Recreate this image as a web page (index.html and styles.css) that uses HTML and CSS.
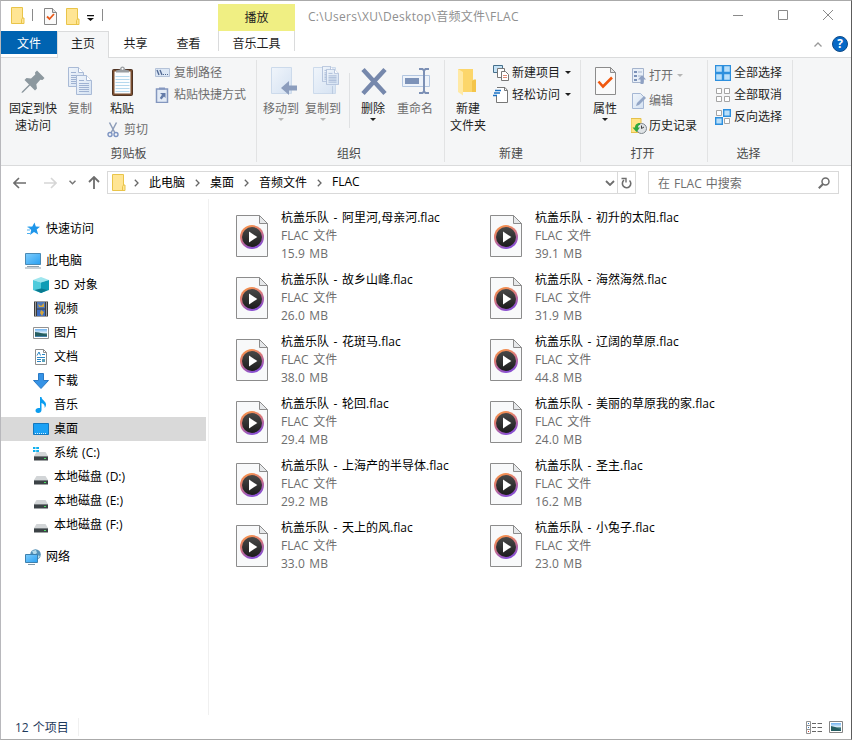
FILE: index.html
```html
<!DOCTYPE html>
<html lang="zh-CN">
<head>
  <meta charset="UTF-8">
  <meta name="viewport" content="width=device-width, initial-scale=1.0">
  <title>FLAC</title>
  <link rel="stylesheet" href="styles.css">
</head>
<body>
  <!-- shared icons -->
  <svg class="defs" width="0" height="0">
    <defs>
      <linearGradient id="gRing" x1="0" y1="0" x2="0.4" y2="1">
        <stop offset="0" stop-color="#ff9a3c"/><stop offset="0.5" stop-color="#d9787a"/><stop offset="1" stop-color="#8a50d0"/>
      </linearGradient>
      <linearGradient id="gDisc" x1="0" y1="0" x2="0" y2="1">
        <stop offset="0" stop-color="#484848"/><stop offset="1" stop-color="#1c1c1c"/>
      </linearGradient>
      <linearGradient id="gBlue" x1="0" y1="0" x2="1" y2="1">
        <stop offset="0" stop-color="#7fcdfc"/><stop offset="1" stop-color="#2aa0f2"/>
      </linearGradient>
      <linearGradient id="gDoc" x1="0" y1="0" x2="1" y2="1">
        <stop offset="0" stop-color="#f0f5fb"/><stop offset="1" stop-color="#d5e2f2"/>
      </linearGradient>
      <linearGradient id="gSky" x1="0" y1="0" x2="0" y2="1">
        <stop offset="0" stop-color="#6fb2f0"/><stop offset="0.5" stop-color="#e4f2fc"/><stop offset="0.6" stop-color="#35706a"/><stop offset="1" stop-color="#4a86b8"/>
      </linearGradient>
    </defs>
    <symbol id="flac" viewBox="0 0 32 42">
      <path d="M.5.5h23l8 8v33H.5z" fill="#f8f9fa" stroke="#8c8c8c"/>
      <path d="M23.5.5v8h8z" fill="#e6e8ea" stroke="#8c8c8c"/>
      <circle cx="16" cy="22" r="12" fill="url(#gRing)"/>
      <circle cx="16" cy="22" r="10" fill="url(#gDisc)"/>
      <path d="M13 16.5v11l8.3-5.5z" fill="#fff"/>
    </symbol>
    <symbol id="folder" viewBox="0 0 14 17">
      <path d="M.5.5h11v10.500h1.500v5.500H.5z" fill="#ffe594" stroke="#e9c449"/>
      <path d="M10.500 16V12.500l1-1.500" fill="none" stroke="#e9c449"/>
    </symbol>
    <symbol id="drive" viewBox="0 0 16 16">
      <path d="M3.500 6h9L15 10H1z" fill="#d2d5d7"/>
      <path d="M1 10h14v4.500H1z" fill="#3c4246"/>
      <path d="M1 10h14v1H1z" fill="#777d80"/>
      <path d="M11 12h2v1h-2z" fill="#48e060"/>
    </symbol>
    <symbol id="gt" viewBox="0 0 5 8">
      <path d="M.8.8 4 4 .8 7.200" fill="none" stroke="#666" stroke-width="1.300"/>
    </symbol>
    <symbol id="page" viewBox="0 0 16 20">
      <path d="M.5.5h10l5 5v14H.5z" fill="url(#gDoc)" stroke="#a9bad6"/>
      <path d="M10.500.5v5h5" fill="#fff" stroke="#a9bad6"/>
      <path d="M3 5.500h5M3 8.500h10M3 10.500h10M3 12.500h10M3 14.500h10M3 16.500h10" stroke="#9fb2d2"/>
    </symbol>
  </svg>

  <div class="window">
    <header class="titlebar">
      <svg class="qa-folder" width="14" height="17"><use href="#folder"/></svg>
      <span class="qa-sep"></span>
      <svg class="qa-check" width="13" height="17" viewBox="0 0 13 17">
        <path d="M.5.5h8l4 4v12H.5z" fill="#fafafa" stroke="#858585"/>
        <path d="M8.500.5v4h4" fill="#ddd" stroke="#858585"/>
        <path d="M3 8.500 5.500 11 10 6" fill="none" stroke="#e8591a" stroke-width="1.800"/>
      </svg>
      <svg class="qa-folder2" width="14" height="17"><use href="#folder"/></svg>
      <svg class="qa-more" width="7" height="6" viewBox="0 0 7 6"><path d="M0 0h7v1.200H0zM0 3h7L3.500 6z" fill="#111"/></svg>
      <span class="qa-sep"></span>
      <div class="context-tab">播放</div>
      <div class="path">C:\Users\XU\Desktop\音频文件\FLAC</div>
      <div class="controls">
        <svg width="10" height="10" viewBox="0 0 10 10"><path d="M0 5.500h10" stroke="#8a8a8a"/></svg>
        <svg width="10" height="10" viewBox="0 0 10 10"><path d="M.5.5h9v9h-9z" fill="none" stroke="#8a8a8a"/></svg>
        <svg width="10" height="10" viewBox="0 0 10 10"><path d="M0 0l10 10M10 0 0 10" stroke="#8a8a8a"/></svg>
      </div>
    </header>

    <nav class="tabs">
      <span class="tab file">文件</span>
      <span class="tab active">主页</span>
      <span class="tab">共享</span>
      <span class="tab">查看</span>
      <span class="tab music">音乐工具</span>
      <span class="help">
        <svg width="8" height="5" viewBox="0 0 8 5"><path d="M.5 4.500 4 1l3.500 3.500" fill="none" stroke="#999" stroke-width="1.300"/></svg>
        <span class="help-dot">?</span>
      </span>
    </nav>

    <section class="ribbon">
      <div class="group clip">
        <div class="group-body">
          <div class="big pin">
            <svg width="32" height="34" viewBox="0 0 32 34"><path d="M18 6.500 20 4.500 27.500 12l-2 2-2.200-.3-4 4.500.7 4.300-2 2-5-5L6 26.500 4.500 27l.5-1.500 7-7-4.500-4.500 2-2 4.500.5 4.300-4z" fill="#8c989f"/></svg>
            <span>固定到快<br>速访问</span>
          </div>
          <div class="big off">
            <svg width="32" height="34" viewBox="0 0 32 34"><use href="#page" x="4" y="1" width="16" height="20"/><use href="#page" x="12" y="9" width="16" height="20"/></svg>
            <span>复制</span>
          </div>
          <div class="paste">
            <div class="big">
              <svg width="32" height="34" viewBox="0 0 32 34">
                <rect x="6.500" y="3.500" width="20" height="26" rx="1" fill="#7a4e30" stroke="#4e3323"/>
                <path d="M8.500 5.500h16v22h-16z" fill="#fbfdff"/>
                <path d="M9.500 10.500h14M9.500 13.500h14M9.500 16.500h14M9.500 19.500h14M9.500 22.500h14M9.500 25.500h14" stroke="#b5d8ee"/>
                <path d="M10 6.500V4.500l4-1c0-4 5-4 5 0l4 1v2z" fill="#9a9ea2"/><circle cx="16.500" cy="2.800" r="1" fill="#fff"/>
              </svg>
              <span>粘贴</span>
            </div>
            <div class="small off">
              <svg width="12" height="16" viewBox="0 0 12 16"><path d="M2.500.5 8 11M9.500.5 4 11" stroke="#8c9cb8" stroke-width="1.500"/><circle cx="3" cy="12.500" r="2" fill="none" stroke="#7d94c2" stroke-width="1.400"/><circle cx="9" cy="12.500" r="2" fill="none" stroke="#7d94c2" stroke-width="1.400"/></svg>
              <span>剪切</span>
            </div>
          </div>
          <div class="list">
            <div class="small off">
              <svg width="16" height="16" viewBox="0 0 16 16"><path d="M.5 3.500h14v8H.5z" fill="#dce7f5" stroke="#b4c2d8"/><path d="M2 5l2 5M5 5l2 5" stroke="#536a94" stroke-width="1.400"/><path d="M8 9h1v1H8zM10 9h1v1h-1zM12 9h1v1h-1z" fill="#536a94"/></svg>
              <span>复制路径</span>
            </div>
            <div class="small off">
              <svg width="16" height="16" viewBox="0 0 16 16"><path d="M1.500 2h11v13.500h-11z" fill="#e3ebf6" stroke="#8497bf" stroke-width="1.500"/><path d="M4 .5h6v2H4z" fill="#8497bf"/><path d="M5 6h5.500v5L9 9.500 6.500 12.500 4.800 11 7 7.800z" fill="#647ca9"/></svg>
              <span>粘贴快捷方式</span>
            </div>
          </div>
        </div>
        <div class="group-name">剪贴板</div>
      </div>

      <div class="group organize">
        <div class="group-body">
          <div class="big off">
            <svg width="32" height="34" viewBox="0 0 32 34"><path d="M6.500 1.500h20v26h-20z" fill="url(#gDoc)" stroke="#ccdaeb"/><path d="M23.500 21v7M23.500 21h3" stroke="#bccbe0"/><path d="M16 22l8-7v4.500h8v5h-8V29z" fill="#8c9dbd"/></svg>
            <span>移动到</span><i class="arrow"></i>
          </div>
          <div class="big off">
            <svg width="32" height="34" viewBox="0 0 32 34"><path d="M6.500 1.500h22v26h-22z" fill="url(#gDoc)" stroke="#ccdaeb"/><path d="M25.500 20v8" stroke="#bccbe0"/><use href="#page" x="15" y="0" width="13" height="16"/><use href="#page" x="19" y="3" width="13" height="16"/></svg>
            <span>复制到</span><i class="arrow"></i>
          </div>
          <span class="divider"></span>
          <div class="big">
            <svg width="32" height="34" viewBox="0 0 32 34"><path d="M6 3.500 28 27.500M28 3.500 6 27.500" stroke="#7688ac" stroke-width="4.500"/></svg>
            <span>删除</span><i class="arrow"></i>
          </div>
          <div class="big off">
            <svg width="32" height="34" viewBox="0 0 32 34"><path d="M3.500 9.500h27v11h-27z" fill="#eef3fa" stroke="#b3c6e0"/><path d="M6 12h14v6H6z" fill="#7c92b8"/><path d="M20 3h3.500l1.500 1.500L26.500 3H30M25 4v22M20 27h3.500l1.500-1.500L26.500 27H30" fill="none" stroke="#7c90b5" stroke-width="2"/></svg>
            <span>重命名</span>
          </div>
        </div>
        <div class="group-name">组织</div>
      </div>

      <div class="group create">
        <div class="group-body">
          <div class="big">
            <svg width="32" height="34" viewBox="0 0 32 34"><path d="M6 3h15v13h3v10H6z" fill="#fcd66b"/><path d="M6 3l5 3v23.500L6 26z" fill="#ffe9a5"/><path d="M20 15l2-1.500h2V26h-4z" fill="#f4c54a"/></svg>
            <span>新建<br>文件夹</span>
          </div>
          <div class="list">
            <div class="small">
              <svg width="16" height="16" viewBox="0 0 16 16"><path d="M.5.5h9v7h-9z" fill="#c6e2f5" stroke="#46708c"/><path d="M4.500 3.500h7v9h-7z" fill="#fff" stroke="#777"/><path d="M8.500 6.500h4l3 3v6h-7z" fill="#fff" stroke="#777"/><path d="M10 10.500h4M10 12.500h4" stroke="#de8c78"/></svg>
              <span>新建项目</span><i class="arrow"></i>
            </div>
            <div class="small">
              <svg width="16" height="16" viewBox="0 0 16 16"><path d="M4 .5h8l2.500 3v12H3.500V9" fill="#fff" stroke="#777"/><path d="M11.500.5v3h3" fill="none" stroke="#777"/><path d="M2 3.500h6M1 6h6M0 8.500h4" stroke="#1a72c4" stroke-width="1.300"/></svg>
              <span>轻松访问</span><i class="arrow"></i>
            </div>
          </div>
        </div>
        <div class="group-name">新建</div>
      </div>

      <div class="group open">
        <div class="group-body">
          <div class="big">
            <svg width="32" height="34" viewBox="0 0 32 34"><path d="M6.500 1.500h15l5 5v22h-20z" fill="#fafafa" stroke="#8c8c8c"/><path d="M21.500 1.500v5h5z" fill="#e4e4e4" stroke="#8c8c8c"/><path d="M9.500 15.500 14 20.500 23 11.500" fill="none" stroke="#f0580f" stroke-width="2.600"/></svg>
            <span>属性</span><i class="arrow"></i>
          </div>
          <div class="list">
            <div class="small off">
              <svg width="16" height="16" viewBox="0 0 16 16"><path d="M1.500.5h11v14h-11z" fill="#e8eff8" stroke="#a5b4cd"/><path d="M3 3h3v2H3zM3 7h3v2H3zM3 11h3v2H3z" fill="#7c92b8"/><path d="M7 4h4M7 8h3" stroke="#a5b4cd"/><path d="M11 7l4 4.500h-2.500V16h-3v-4.500H7z" fill="#8fa1c3"/></svg>
              <span>打开</span><i class="arrow"></i>
            </div>
            <div class="small off">
              <svg width="16" height="16" viewBox="0 0 16 16"><path d="M1.500.5h8l3 3v12h-11z" fill="url(#gDoc)" stroke="#a5b7d4"/><path d="M5 13l1-3 7-7 2 2-7 7z" fill="#93a6c6"/></svg>
              <span>编辑</span>
            </div>
            <div class="small">
              <svg width="16" height="16" viewBox="0 0 16 16"><path d="M0 .5h10v14H0z" fill="#ffe487" stroke="#e5c04b"/><circle cx="10.500" cy="10.500" r="5" fill="#dfe3e6" stroke="#7e868c"/><path d="M10.500 7.500v3l2.500-1.500" fill="none" stroke="#444"/><path d="M9 5C5 5 4 7.500 4 9.500H1.500L5.500 14l3.500-4.500H7c0-2 1-2.500 2-2.500z" fill="#2fa83f"/></svg>
              <span>历史记录</span>
            </div>
          </div>
        </div>
        <div class="group-name">打开</div>
      </div>

      <div class="group select">
        <div class="group-body">
          <div class="list">
            <div class="small">
              <svg width="16" height="16" viewBox="0 0 16 16"><path d="M.5.5h7v7h-7zM8.500.5h7v7h-7zM.5 8.500h7v7h-7zM8.500 8.500h7v7h-7z" fill="#b9dffa" stroke="#2d8fdd" stroke-width="1.400"/></svg>
              <span>全部选择</span>
            </div>
            <div class="small">
              <svg width="16" height="16" viewBox="0 0 16 16"><path d="M1.500 1.500h5v5h-5zM9.500 1.500h5v5h-5zM1.500 9.500h5v5h-5zM9.500 9.500h5v5h-5z" fill="#fff" stroke="#a5a5a5"/></svg>
              <span>全部取消</span>
            </div>
            <div class="small">
              <svg width="16" height="16" viewBox="0 0 16 16"><path d="M1.500 1.500h5v5h-5zM9.500 9.500h5v5h-5z" fill="#fff" stroke="#a5a5a5"/><path d="M8.700.7h6.600v6.600H8.700zM.7 8.700h6.600v6.600H.7z" fill="#b9dffa" stroke="#2d8fdd" stroke-width="1.400"/></svg>
              <span>反向选择</span>
            </div>
          </div>
        </div>
        <div class="group-name">选择</div>
      </div>
    </section>

    <div class="address-row">
      <svg class="back" width="13" height="12" viewBox="0 0 13 12"><path d="M6 1 1 6l5 5M1 6h12" fill="none" stroke="#6d6d6d" stroke-width="1.600"/></svg>
      <svg class="forward" width="13" height="12" viewBox="0 0 13 12"><path d="M7 1l5 5-5 5M12 6H0" fill="none" stroke="#d6d6d6" stroke-width="1.600"/></svg>
      <svg class="recent" width="7" height="5" viewBox="0 0 7 5"><path d="M.5.8 3.500 3.800 6.500.8" fill="none" stroke="#777" stroke-width="1.500"/></svg>
      <svg class="up" width="12" height="13" viewBox="0 0 12 13"><path d="M1 6l5-5 5 5M6 1v12" fill="none" stroke="#6d6d6d" stroke-width="1.800"/></svg>
      <div class="address">
        <svg class="address-folder" width="14" height="17"><use href="#folder"/></svg>
        <svg class="gt" width="5" height="8"><use href="#gt"/></svg>
        <span>此电脑</span>
        <svg class="gt" width="5" height="8"><use href="#gt"/></svg>
        <span>桌面</span>
        <svg class="gt" width="5" height="8"><use href="#gt"/></svg>
        <span>音频文件</span>
        <svg class="gt" width="5" height="8"><use href="#gt"/></svg>
        <span>FLAC</span>
        <svg class="drop" width="10" height="6" viewBox="0 0 10 6"><path d="M1 1l4 4 4-4" fill="none" stroke="#6d6d6d" stroke-width="1.800"/></svg>
        <div class="refresh"><svg width="11" height="12" viewBox="0 0 11 12"><path d="M8.500 3.500a4.200 4.200 0 1 1-5.500-.3" fill="none" stroke="#6d6d6d" stroke-width="1.600"/><path d="M.5 1.500H5v4" fill="none" stroke="#6d6d6d" stroke-width="1.400"/></svg></div>
      </div>
      <div class="search">
        <span>在 FLAC 中搜索</span>
        <svg width="12" height="12" viewBox="0 0 12 12"><circle cx="7.500" cy="4.500" r="3.500" fill="none" stroke="#6d6d6d" stroke-width="1.500"/><path d="M5 7 .8 11.200" stroke="#6d6d6d" stroke-width="2"/></svg>
      </div>
    </div>

    <main class="main">
      <aside class="tree">
        <div class="node root">
          <svg width="16" height="16" viewBox="0 0 16 16"><path d="M9.500 1.500l1.300 4 4.200.2-3.300 2.800 1.500 5-4.200-2.500-4 3 1.200-5L3 6l4.300-.4z" fill="#1e96ea"/><path d="M2.500 6h3M2 9h3M2 12.500h3" stroke="#4bb0f0"/></svg>
          <span>快速访问</span>
        </div>
        <div class="node root gap">
          <svg width="16" height="16" viewBox="0 0 16 16"><path d="M.5.5h15v11H.5z" fill="url(#gBlue)" stroke="#4a8ab5"/><path d="M2 13h12v1H2zM0 14.500h16v1H0z" fill="#90a0ab"/></svg>
          <span>此电脑</span>
        </div>
        <div class="node">
          <svg width="16" height="16" viewBox="0 0 16 16"><path d="M8 0l8 3-8 2.500L0 3z" fill="#9fe6ee"/><path d="M0 3l8 2.500V16l-8-3z" fill="#4fcbdc"/><path d="M16 3 8 5.500V16l8-3z" fill="#0f9cb5"/><path d="M8 11.500 14.500 13 8 16 1.500 13z" fill="#087a90"/></svg>
          <span>3D 对象</span>
        </div>
        <div class="node">
          <svg width="16" height="16" viewBox="0 0 16 16"><path d="M1 .5h14v15H1z" fill="#3c3c3c"/><path d="M4 1h8v6.500H4z" fill="#5078b8"/><path d="M4 8.500h8V15H4z" fill="#3c6cc0"/><path d="M5 3l3 2 3-3v4H6zM8 9l3 2-2 4-2-3z" fill="#d5a63b"/><path d="M2.500 1.500v13M13.500 1.500v13" stroke="#fff" stroke-dasharray="1 1"/></svg>
          <span>视频</span>
        </div>
        <div class="node">
          <svg width="16" height="16" viewBox="0 0 16 16"><path d="M.5 2.500h15v11H.5z" fill="#fff" stroke="#929292"/><path d="M2 4h12v8H2z" fill="url(#gSky)"/><path d="M2 7l4 .5 8 2.500v1H2z" fill="#255e62"/></svg>
          <span>图片</span>
        </div>
        <div class="node">
          <svg width="16" height="16" viewBox="0 0 16 16"><path d="M2.500.5h8l3 3v12h-11z" fill="#fff" stroke="#8e8e8e"/><path d="M10.500.5v3h3" fill="none" stroke="#8e8e8e"/><path d="M4 6.500 6 3l1.500 3.500M9 5.500h3M4 8.500h8M4 10.500h4M4 12.500h4" fill="none" stroke="#2c86c4"/><path d="M9 10h3v3H9z" fill="#5aa0b8"/></svg>
          <span>文档</span>
        </div>
        <div class="node">
          <svg width="16" height="16" viewBox="0 0 16 16"><path d="M5.500.5h5v7h5L8 15.500.5 7.500h5z" fill="#3593e6" stroke="#2a79c4"/></svg>
          <span>下载</span>
        </div>
        <div class="node">
          <svg width="16" height="16" viewBox="0 0 16 16"><path d="M7 0h1.500c0 3 4.500 4 4.500 7.500 0 1.500-.7 2.800-1.300 3.500.3-2.500-.7-4.500-3.200-5V13c0 1.800-1.500 3-3.300 3S2.500 15 2.500 13.500 4 11 5.500 11H7z" fill="#0a9df0"/></svg>
          <span>音乐</span>
        </div>
        <div class="node selected">
          <svg width="16" height="16" viewBox="0 0 16 16"><path d="M.5 2.500h15v11H.5z" fill="#1ba1f5" stroke="#1477bd"/><path d="M2 12.500h12" stroke="#d8effc" stroke-dasharray="1 1"/></svg>
          <span>桌面</span>
        </div>
        <div class="node">
          <svg width="16" height="16" viewBox="0 0 16 16"><use href="#drive" y="1" width="16" height="16"/><path d="M0 2h2.500v2H0zM3.200 2H6v2H3.200zM0 5h2.500v2H0zM3.200 5H6v2H3.200z" fill="#12b0ee"/></svg>
          <span>系统 (C:)</span>
        </div>
        <div class="node">
          <svg width="16" height="16"><use href="#drive" y="1"/></svg>
          <span>本地磁盘 (D:)</span>
        </div>
        <div class="node">
          <svg width="16" height="16"><use href="#drive" y="1"/></svg>
          <span>本地磁盘 (E:)</span>
        </div>
        <div class="node">
          <svg width="16" height="16"><use href="#drive" y="1"/></svg>
          <span>本地磁盘 (F:)</span>
        </div>
        <div class="node root gap">
          <svg width="16" height="16" viewBox="0 0 16 16"><circle cx="10.500" cy="5.500" r="5.300" fill="#5692b8"/><path d="M7 2l4-1 1 3-3 2zM12 6l3 1-2 3z" fill="#b5dbea"/><path d="M.5 5.500h12v8H.5z" fill="url(#gBlue)" stroke="#3e80ad"/><path d="M3 15.500h7" stroke="#8199aa"/></svg>
          <span>网络</span>
        </div>
      </aside>

      <section class="files" id="files"></section>
    </main>

    <footer class="status">
      <span class="count">12 个项目</span>
      <svg class="view-list" width="16" height="13" viewBox="0 0 16 13"><path d="M.5.5h4v12h-4zM.5 4.500h4M.5 8.500h4" fill="none" stroke="#919191"/><path d="M6 2.500h4M11.500 2.500H16M6 6.500h4M11.500 6.500H16M6 10.500h4M11.500 10.500H16" stroke="#666"/><path d="M2 2h1v1H2zM2 6h1v1H2z" fill="#367bc4"/><path d="M2 10h1v1H2z" fill="#c43"/></svg>
      <svg class="view-icons" width="14" height="12" viewBox="0 0 14 12"><path d="M.5.5h13v11H.5z" fill="#fff" stroke="#858585"/><path d="M2 2h10v8H2z" fill="url(#gSky)"/><path d="M2 5l4 1 6 3v1H2z" fill="#255e62"/></svg>
    </footer>
  </div>

  <script>
    const files = [
      ["阿里河,母亲河", "15.9"],
      ["初升的太阳", "39.1"],
      ["故乡山峰", "26.0"],
      ["海然海然", "31.9"],
      ["花斑马", "38.0"],
      ["辽阔的草原", "44.8"],
      ["轮回", "29.4"],
      ["美丽的草原我的家", "24.0"],
      ["上海产的半导体", "29.2"],
      ["圣主", "16.2"],
      ["天上的风", "33.0"],
      ["小兔子", "23.0"]
    ];

    const filesDiv = document.getElementById("files");
    files.forEach(([name, size]) => {
      const div = document.createElement("div");
      div.className = "item";
      div.innerHTML = `<svg width="32" height="42"><use href="#flac"/></svg>
        <div><p class="name">杭盖乐队 - ${name}.flac</p><p>FLAC 文件</p><p>${size} MB</p></div>`;
      filesDiv.appendChild(div);
    });
  </script>
</body>
</html>
```

FILE: styles.css
```css
* {
  box-sizing: border-box;
}
body {
  margin: 0;
  font-family: "Open Sans", "Noto Sans CJK SC", sans-serif;
  font-size: 12px;
  word-spacing: 1px;
  color: #1e1e1e;
  background-color: #fff;
}
p {
  margin: 0;
}
svg {
  display: block;
  flex: none;
}
.defs {
  position: absolute;
}
.window {
  width: 852px;
  height: 740px;
  display: flex;
  flex-direction: column;
  border: 1px solid #aaa;
  border-right-color: #5c5c5c;
  border-left-color: #b8b8bc;
  overflow: hidden;
  white-space: nowrap;
}

/* title bar */
.titlebar {
  display: flex;
  align-items: center;
  height: 30px;
  flex: none;
  padding-left: 10px;
}
.qa-sep {
  width: 1px;
  height: 12px;
  margin-bottom: 2px;
  background-color: #8a8a8a;
}
.qa-folder {
  margin: 0 7px 2px 0;
}
.qa-check {
  margin: 0 9px 0 11px;
}
.qa-more {
  margin: 3px 8px 0 7px;
}
.context-tab {
  width: 77px;
  height: 27px;
  line-height: 27px;
  margin: 3px 13px 0 115px;
  text-align: center;
  background-color: #f0ef83;
}
.path {
  color: #8f8f8f;
  letter-spacing: 0.3px;
}
.controls {
  display: flex;
  gap: 35px;
  margin: 0 18px 2px auto;
}

/* tabs */
.tabs {
  display: flex;
  height: 27px;
  flex: none;
  border-bottom: 1px solid #dadbdc;
}
.tab {
  width: 53px;
  height: 24px;
  line-height: 25px;
  text-align: center;
}
.tab.file {
  width: 56px;
  height: 23px;
  background-color: #0063b1;
  color: #fff;
}
.tab.active {
  width: 52px;
  height: 27px;
  line-height: 24px;
  border: 1px solid #dadbdc;
  border-bottom: none;
  background-color: #f5f6f7;
}
.tab.music {
  width: 77px;
  height: 20px;
  margin-left: 3px;
  border-left: 1px solid #dadbdc;
  border-right: 1px solid #dadbdc;
}
.help {
  display: flex;
  align-items: center;
  gap: 10px;
  margin: 0 3px 0 auto;
}
.help-dot {
  width: 16px;
  height: 16px;
  line-height: 14px;
  border: 1px solid #104a86;
  border-radius: 50%;
  background-color: #0668c6;
  color: #fff;
  font-weight: bold;
  text-align: center;
}

/* ribbon */
.ribbon {
  display: flex;
  height: 108px;
  flex: none;
  background-color: #f5f6f7;
  border-bottom: 1px solid #dadbdc;
}
.group {
  display: flex;
  flex-direction: column;
  height: 102px;
  margin-top: 2px;
  border-right: 1px solid #e2e3e4;
}
.group-body {
  display: flex;
  height: 84px;
}
.clip {
  width: 256px;
}
.clip .group-body {
  padding-left: 6px;
}
.organize {
  width: 188px;
}
.organize .group-body {
  padding-left: 3px;
}
.create {
  width: 136px;
}
.create .group-body {
  padding-left: 2px;
}
.open {
  width: 127px;
}
.open .group-body {
  padding-left: 3px;
}
.select {
  width: 85px;
}
.select .group-body {
  padding-left: 7px;
}
.group-name {
  height: 18px;
  line-height: 20px;
  padding-right: 3px;
  text-align: center;
  color: #4a4a4a;
}
.clip .group-name {
  padding-right: 0;
}
.big {
  display: flex;
  flex-direction: column;
  align-items: center;
  width: 42px;
  padding-top: 6px;
  line-height: 17px;
  text-align: center;
}
.big.pin {
  width: 52px;
}
.off {
  color: #6d6d6d;
}
.arrow {
  width: 0;
  height: 0;
  border: 3px solid transparent;
  border-top-color: #1e1e1e;
  border-bottom: none;
}
.big .arrow {
  margin-top: 1px;
}
.off .arrow {
  border-top-color: #b5b5b5;
}
.small {
  display: flex;
  align-items: center;
  gap: 3px;
  height: 22px;
}
.small span,
.node span,
.address span {
  margin-top: -2px;
}
.small .arrow {
  margin: -1px 0 0 2px;
}
.paste {
  width: 43px;
}
.paste .small {
  gap: 5px;
  margin: 2px 0 0 6px;
}
.list {
  padding-top: 2px;
}
.clip .list {
  margin-left: 11px;
}
.create .list {
  margin-left: 4px;
}
.open .list {
  margin-left: 5px;
  padding-top: 3px;
}
.open .list .small {
  height: 25px;
  gap: 2px;
}
.divider {
  width: 1px;
  height: 55px;
  margin: 13px 2px 0 5px;
  background-color: #dfe1e3;
}

/* address bar */
.address-row {
  display: flex;
  align-items: center;
  height: 33px;
  flex: none;
  padding-left: 12px;
  color: #000;
}
.forward {
  margin-left: 18px;
}
.recent {
  margin: 0 12px;
}
.address {
  display: flex;
  align-items: center;
  width: 529px;
  height: 23px;
  margin-left: 7px;
  padding-left: 4px;
  border: 1px solid #d9d9d9;
}
.address-folder {
  margin-right: -2px;
}
.gt {
  margin: 0 10px;
}
.address .drop {
  margin: 0 2px 0 auto;
}
.refresh {
  display: flex;
  align-items: center;
  justify-content: center;
  width: 18px;
  height: 21px;
  border-left: 1px solid #d9d9d9;
}
.search {
  display: flex;
  align-items: center;
  justify-content: space-between;
  width: 191px;
  height: 23px;
  margin-left: 12px;
  padding: 0 8px 0 9px;
  border: 1px solid #d9d9d9;
  color: #6d6d6d;
}

/* tree and files */
.main {
  display: flex;
  flex: 1;
  color: #000;
}
.tree {
  width: 208px;
  padding-top: 18px;
  border-right: 1px solid #f0f0f0;
}
.node {
  display: flex;
  align-items: center;
  gap: 5px;
  width: 205px;
  height: 24px;
  padding-left: 32px;
}
.node.root {
  padding-left: 24px;
}
.node.gap {
  margin-top: 8px;
}
.node.selected {
  background-color: #d9d9d9;
}
.files {
  display: grid;
  grid-template-columns: 254px 254px;
  grid-auto-rows: 62px;
  padding: 10px 0 0 27px;
}
.item {
  display: flex;
  gap: 13px;
  line-height: 18px;
  word-spacing: 1.5px;
  color: #6d6d6d;
}
.item svg {
  margin-top: 6px;
}
.item .name {
  color: #000;
}

/* status bar */
.status {
  display: flex;
  align-items: center;
  height: 24px;
  flex: none;
  padding: 0 8px 0 14px;
  color: #1e395b;
}
.count {
  padding-right: 9px;
  border-right: 1px solid #f0f0f0;
}
.view-list {
  margin: 0 7px 0 auto;
}
```
